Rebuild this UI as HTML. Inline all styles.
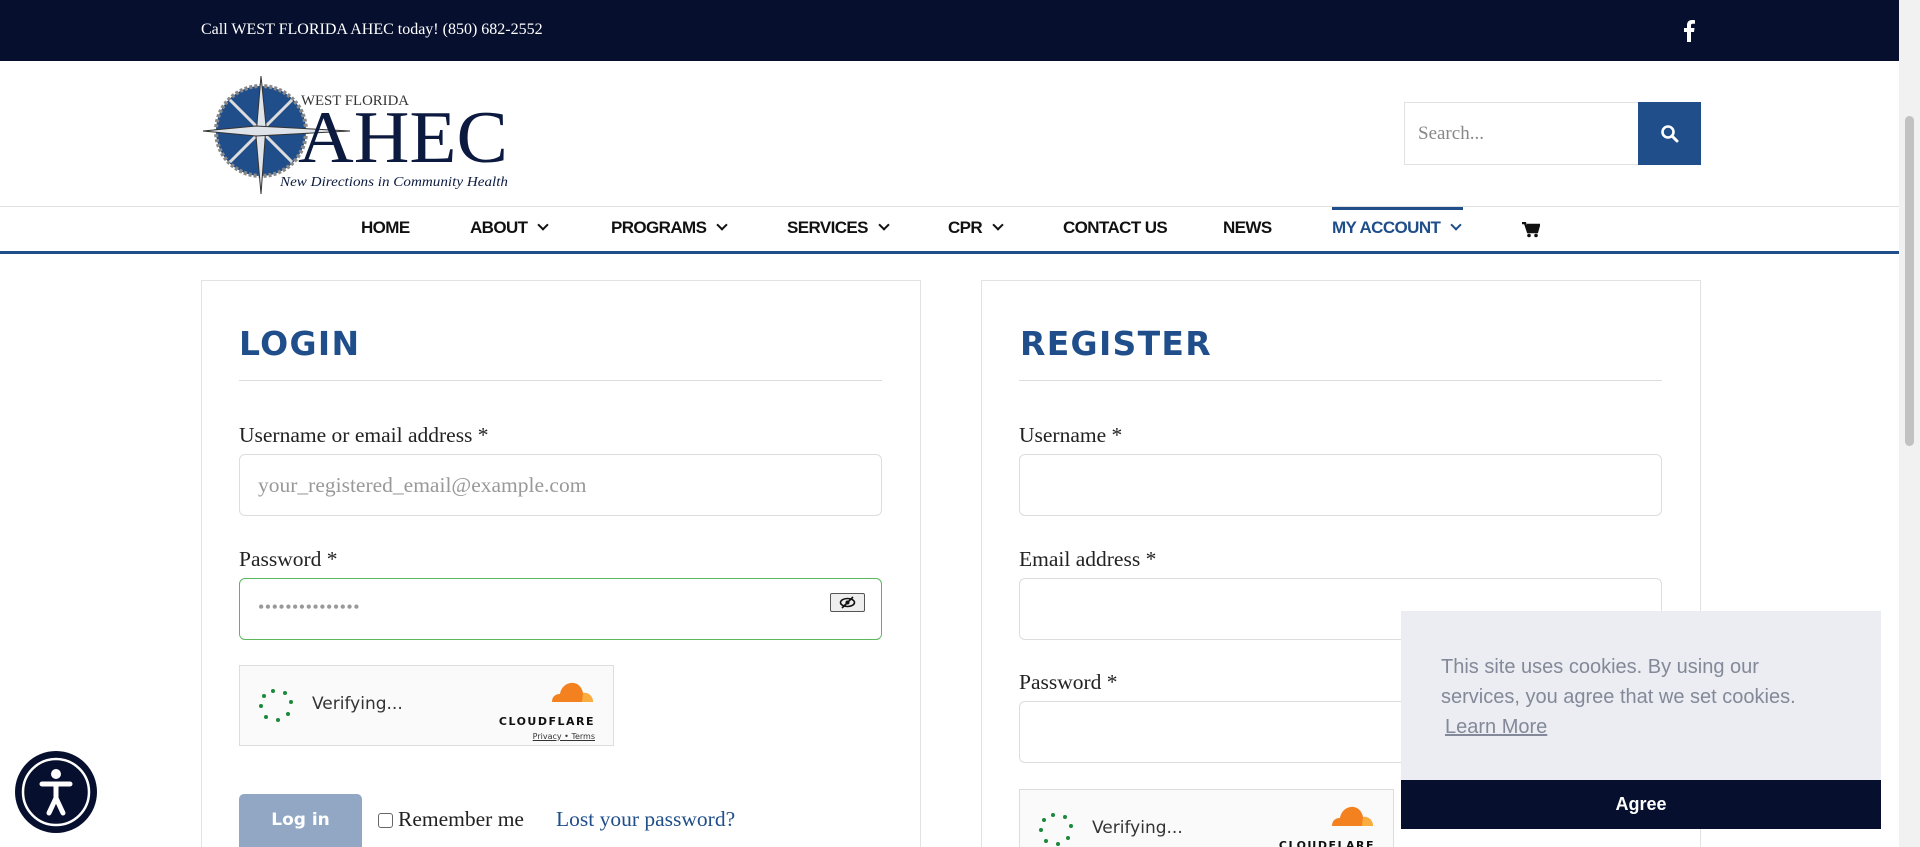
<!DOCTYPE html>
<html><head><meta charset="utf-8"><style>
*{box-sizing:border-box;margin:0;padding:0}
html,body{width:1920px;height:847px;overflow:hidden}
body{background:#fff;font-family:"Liberation Serif",serif;position:relative;color:#222}
.abs{position:absolute}
.top{left:0;top:0;width:1899px;height:61px;background:#060f2e}
.top span{position:absolute;left:201px;top:21px;color:#fff;font-size:16px}
.nav a{position:absolute;top:218px;font-family:"Liberation Sans",sans-serif;font-weight:bold;font-size:17px;color:#111;letter-spacing:-0.6px;white-space:nowrap}
.nav .chev{display:inline-block;width:8px;height:8px;border-right:2px solid currentColor;border-bottom:2px solid currentColor;transform:rotate(45deg);margin-left:12px;position:relative;top:-4px}
.box{border:1px solid #e2e2e2;top:280px;height:600px;width:720px}
h2{position:absolute;font-family:"DejaVu Sans",sans-serif;font-weight:bold;font-size:33px;color:#1f4e8a;letter-spacing:1.3px}
.rule{height:1px;background:#ddd;width:643px}
.lbl{font-size:21.5px;color:#222}
.inp{border:1px solid #ddd;border-radius:6px;width:643px;height:62px;background:#fff}
.ts{width:375px;height:81px;border:1px solid #ddd;background:#fafafa}
.ts .v{position:absolute;left:72px;top:28px;font-family:"DejaVu Sans",sans-serif;font-size:17px;color:#333}
.ts .cf{position:absolute;right:18px;top:49px;font-family:"DejaVu Sans",sans-serif;font-weight:bold;font-size:11px;letter-spacing:1.5px;color:#111}
.ts .pt{position:absolute;right:18px;top:66px;font-family:"DejaVu Sans",sans-serif;font-size:8px;color:#333;text-decoration:underline}
</style></head><body>
<div class="abs top"><span>Call WEST FLORIDA AHEC today! (850) 682-2552</span>
<svg class="abs" style="left:1683px;top:20px" width="12" height="22" viewBox="0 0 12 22"><path d="M8 22V12h3l.5-4H8V5.5C8 4.4 8.3 3.7 9.9 3.7H12V.2C11.6.1 10.4 0 9 0 6 0 4 1.8 4 5.2V8H1v4h3v10z" fill="#fff"/></svg></div>
<!-- logo -->
<svg class="abs" style="left:200px;top:74px" width="312" height="122" viewBox="0 0 312 122">
<circle cx="61" cy="57" r="45" fill="#1f4e8a" stroke="#888" stroke-width="4" stroke-dasharray="3 2"/>
<line x1="30" y1="26" x2="92" y2="88" stroke="#ddd" stroke-width="3"/><line x1="92" y1="26" x2="30" y2="88" stroke="#ddd" stroke-width="3"/>
<polygon points="61,2 66,52 61,120 56,62" fill="#dfe3ea" stroke="#333" stroke-width="1"/>
<polygon points="3,57 56,52 150,57 56,62" fill="#dfe3ea" stroke="#333" stroke-width="1"/>
<text x="101" y="31" font-family="Liberation Serif" font-size="15" fill="#333" textLength="108" lengthAdjust="spacingAndGlyphs">WEST FLORIDA</text>
<text x="98" y="88" font-family="Liberation Serif" font-size="74" fill="#0c1a3f" textLength="210" lengthAdjust="spacingAndGlyphs">AHEC</text>
<text x="80" y="112" font-family="Liberation Serif" font-style="italic" font-size="14" fill="#0c1a3f" textLength="228" lengthAdjust="spacingAndGlyphs">New Directions in Community Health</text>
</svg>
<div class="abs" style="left:1404px;top:102px;width:235px;height:63px;border:1px solid #e2e2e2;background:#fff"><span style="position:absolute;left:13px;top:20px;font-size:19px;color:#888">Search...</span></div>
<div class="abs" style="left:1638px;top:102px;width:63px;height:63px;background:#1f4e8a"><svg style="position:absolute;left:22px;top:22px" width="19" height="19" viewBox="0 0 19 19"><circle cx="8" cy="8" r="5.5" stroke="#fff" stroke-width="2.6" fill="none"/><line x1="12" y1="12" x2="17" y2="17" stroke="#fff" stroke-width="3" stroke-linecap="round"/></svg></div>
<div class="abs" style="left:0;top:206px;width:1899px;height:1px;background:#e0e0e0"></div>
<div class="abs" style="left:0;top:251px;width:1899px;height:3px;background:#1f4e8a"></div>
<div class="abs" style="left:1332px;top:207px;width:131px;height:3px;background:#1f4e8a"></div>
<div class="nav">
<a style="left:361px">HOME</a>
<a style="left:470px">ABOUT<i class="chev"></i></a>
<a style="left:611px">PROGRAMS<i class="chev"></i></a>
<a style="left:787px">SERVICES<i class="chev"></i></a>
<a style="left:948px">CPR<i class="chev"></i></a>
<a style="left:1063px">CONTACT US</a>
<a style="left:1223px">NEWS</a>
<a style="left:1332px;color:#1f4e8a">MY ACCOUNT<i class="chev"></i></a>
</div>
<svg class="abs" style="left:1522px;top:222px" width="18" height="16" viewBox="0 0 18 16"><path d="M0 1h3l3 9h9l2-7H5" fill="none" stroke="#111" stroke-width="2.4"/><rect x="5" y="4" width="11" height="5" fill="#111"/><circle cx="7" cy="13.5" r="1.8" fill="#111"/><circle cx="14" cy="13.5" r="1.8" fill="#111"/></svg>

<!-- login -->
<div class="abs box" style="left:201px"></div>
<h2 style="left:239px;top:324px">LOGIN</h2>
<div class="abs rule" style="left:239px;top:380px"></div>
<div class="abs lbl" style="left:239px;top:423px">Username or email address *</div>
<div class="abs inp" style="left:239px;top:454px"><span style="position:absolute;left:18px;top:18px;font-size:21.5px;color:#999">your_registered_email@example.com</span></div>
<div class="abs lbl" style="left:239px;top:547px">Password *</div>
<div class="abs inp" style="left:239px;top:578px;border-color:#5cb85c"><span style="position:absolute;left:18px;top:18px;font-size:18px;color:#999;letter-spacing:0.5px">•••••••••••••••</span>
<div style="position:absolute;left:590px;top:14px;width:35px;height:19px;border:1px solid #555;border-radius:2px;background:#eee"><svg width="33" height="17" viewBox="0 0 33 17"><ellipse cx="16.5" cy="8.5" rx="7" ry="4" fill="none" stroke="#111" stroke-width="1.6"/><circle cx="16.5" cy="8.5" r="2" fill="#111"/><line x1="11" y1="14" x2="22" y2="3" stroke="#111" stroke-width="1.6"/></svg></div></div>
<div class="abs ts" style="left:239px;top:665px">
<svg style="position:absolute;left:18px;top:21px" width="40" height="40" viewBox="0 0 40 40" fill="#1a8a3a"><circle cx="15" cy="4" r="2"/><circle cx="27" cy="6" r="2"/><circle cx="33" cy="15" r="2"/><circle cx="30" cy="27" r="2"/><circle cx="20" cy="33" r="2"/><circle cx="8" cy="30" r="2"/><circle cx="3" cy="19" r="2"/><circle cx="6" cy="9" r="2"/></svg>
<span class="v">Verifying...</span>
<svg style="position:absolute;right:19px;top:14px" width="44" height="22" viewBox="0 0 44 22"><path d="M2 22c0-5 3-8 8-8 1-7 7-12 14-11 5 1 8 5 9 10 5-1 10 3 10 9z" fill="#f48120"/><path d="M33 13c5-1 10 3 10 9H32z" fill="#faad3f"/></svg>
<span class="cf">CLOUDFLARE</span><span class="pt">Privacy • Terms</span></div>
<div class="abs" style="left:239px;top:794px;width:123px;height:60px;border-radius:5px;background:#92a7c3;color:#fff;font-family:'DejaVu Sans',sans-serif;font-weight:bold;font-size:17px;text-align:center;line-height:53px">Log in</div>
<div class="abs" style="left:378px;top:813px;width:15px;height:15px;border:1px solid #666;border-radius:3px"></div>
<div class="abs lbl" style="left:398px;top:807px">Remember me</div>
<div class="abs lbl" style="left:556px;top:807px;color:#1f4e8a">Lost your password?</div>

<!-- register -->
<div class="abs box" style="left:981px"></div>
<h2 style="left:1020px;top:324px">REGISTER</h2>
<div class="abs rule" style="left:1019px;top:380px"></div>
<div class="abs lbl" style="left:1019px;top:423px">Username *</div>
<div class="abs inp" style="left:1019px;top:454px"></div>
<div class="abs lbl" style="left:1019px;top:547px">Email address *</div>
<div class="abs inp" style="left:1019px;top:578px"></div>
<div class="abs lbl" style="left:1019px;top:670px">Password *</div>
<div class="abs inp" style="left:1019px;top:701px"></div>
<div class="abs ts" style="left:1019px;top:789px">
<svg style="position:absolute;left:18px;top:21px" width="40" height="40" viewBox="0 0 40 40" fill="#1a8a3a"><circle cx="15" cy="4" r="2"/><circle cx="27" cy="6" r="2"/><circle cx="33" cy="15" r="2"/><circle cx="30" cy="27" r="2"/><circle cx="20" cy="33" r="2"/><circle cx="8" cy="30" r="2"/><circle cx="3" cy="19" r="2"/><circle cx="6" cy="9" r="2"/></svg>
<span class="v">Verifying...</span>
<svg style="position:absolute;right:19px;top:14px" width="44" height="22" viewBox="0 0 44 22"><path d="M2 22c0-5 3-8 8-8 1-7 7-12 14-11 5 1 8 5 9 10 5-1 10 3 10 9z" fill="#f48120"/><path d="M33 13c5-1 10 3 10 9H32z" fill="#faad3f"/></svg>
<span class="cf">CLOUDFLARE</span></div>

<!-- cookie -->
<div class="abs" style="left:1401px;top:611px;width:480px;height:218px;background:#ebedf2">
<div style="position:absolute;left:40px;top:41px;width:365px;font-family:'Liberation Sans',sans-serif;font-size:20px;line-height:30px;color:#838998">This site uses cookies. By using our services, you agree that we set cookies.<br><span style="text-decoration:underline;margin-left:4px">Learn More</span></div>
<div style="position:absolute;left:0;bottom:0;width:480px;height:49px;background:#060f2e;color:#fff;font-family:'Liberation Sans',sans-serif;font-weight:bold;font-size:18px;text-align:center;line-height:49px">Agree</div></div>

<!-- accessibility -->
<svg class="abs" style="left:14px;top:750px" width="84" height="84" viewBox="0 0 84 84"><circle cx="42" cy="42" r="41" fill="#060f2e"/><circle cx="42" cy="42" r="33" fill="none" stroke="#fff" stroke-width="2.5"/><circle cx="42" cy="24" r="5" fill="#fff"/><path d="M28 34h28M42 34v14l-7 15M42 48l7 15" stroke="#fff" stroke-width="5" stroke-linecap="round" fill="none"/></svg>

<!-- scrollbar -->
<div class="abs" style="left:1899px;top:0;width:21px;height:847px;background:#f1f1f1"></div>
<div class="abs" style="left:1905px;top:116px;width:9px;height:330px;border-radius:5px;background:#c1c1c1"></div>
</body></html>
